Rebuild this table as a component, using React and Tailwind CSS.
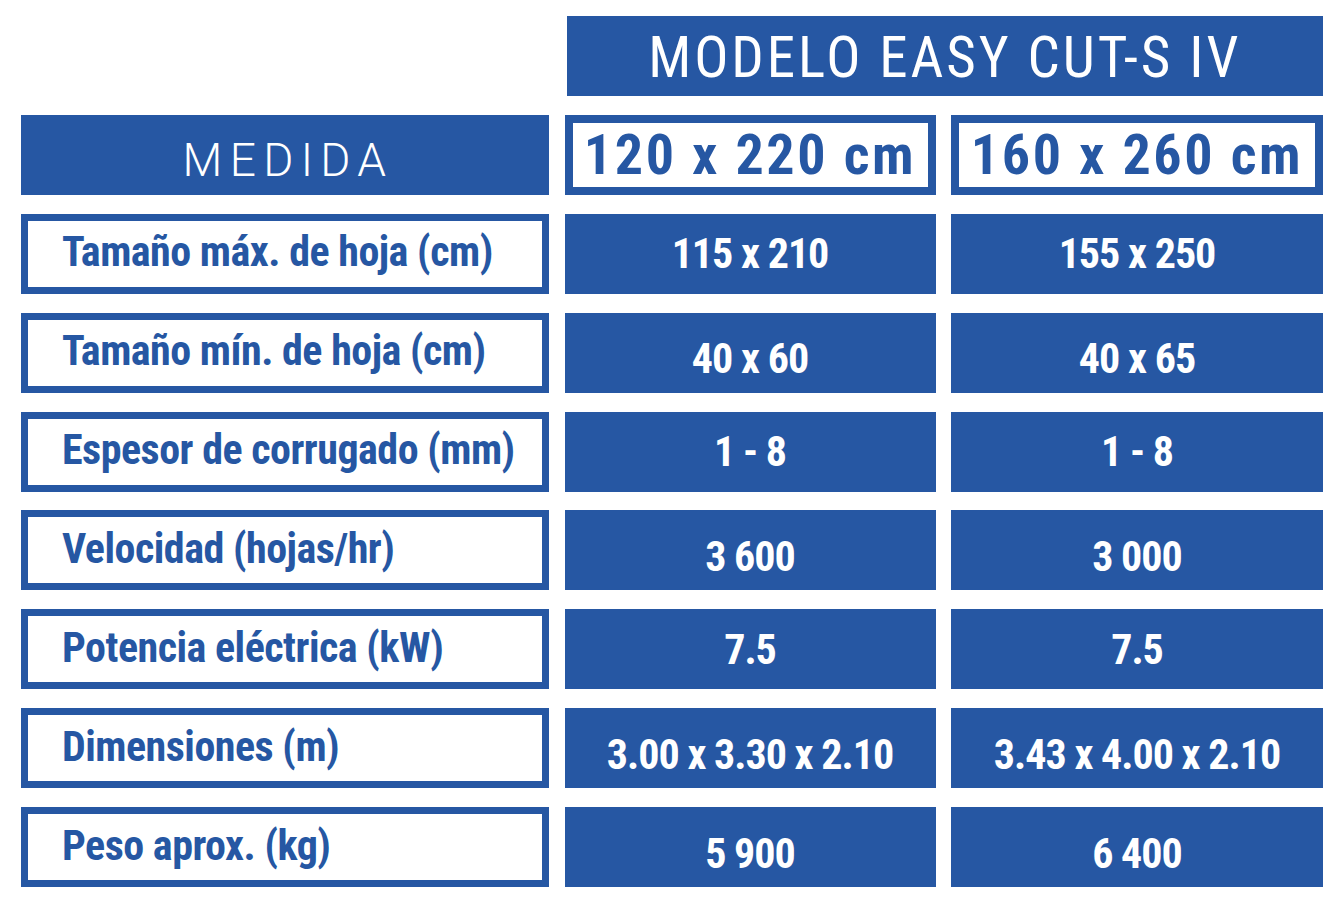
import React from 'react';

const rows = [
    { label: 'Tamaño máx. de hoja (cm)', a: '115 x 210', b: '155 x 250', low: false },
    { label: 'Tamaño mín. de hoja (cm)', a: '40 x 60', b: '40 x 65', low: true },
    { label: 'Espesor de corrugado (mm)', a: '1 - 8', b: '1 - 8', low: false },
    { label: 'Velocidad (hojas/hr)', a: '3 600', b: '3 000', low: true },
    { label: 'Potencia eléctrica (kW)', a: '7.5', b: '7.5', low: false },
    { label: 'Dimensiones (m)', a: '3.00 x 3.30 x 2.10', b: '3.43 x 4.00 x 2.10', low: true },
    { label: 'Peso aprox. (kg)', a: '5 900', b: '6 400', low: true },
];

function ValueCell({ text, low }) {
    return (
        <div className={`h-[80px] bg-[#2657a3] flex items-center justify-center text-white font-bold text-[42px] tracking-[-1px] font-['Liberation_Sans_Narrow','Roboto_Condensed',sans-serif] ${low ? 'pt-[12px]' : 'pt-0'}`}>
            {text}
        </div>
    );
}

function SizeCell({ text }) {
    return (
        <div className="h-[80px] border-[8px] border-[#2657a3] bg-white flex items-center justify-center text-[#2657a3] font-bold text-[56px] tracking-[2.6px] font-['Liberation_Sans_Narrow','Roboto_Condensed',sans-serif]">
            {text}
        </div>
    );
}

export default function App() {
    return (
        <div className="w-full h-[903px] bg-white pt-[16px] pl-[21px]">
            <div className="grid grid-cols-[528px_371px_372px] gap-x-[15.5px] gap-y-[18.9px]">
                {/* model header */}
                <div className="col-start-2 col-span-2 ml-[2px] h-[80px] bg-[#2657a3] flex items-center justify-center text-white text-[57px] tracking-[2.9px] pt-[4px] font-['Liberation_Sans_Narrow','Roboto_Condensed',sans-serif]">
                    MODELO EASY CUT-S IV
                </div>

                <div className="h-[80px] bg-[#2657a3] flex items-center justify-center text-white text-[46px] font-light tracking-[0.16em] pl-[6px] pt-[12px] font-['Roboto',sans-serif]">
                    MEDIDA
                </div>
                <SizeCell text="120 x 220 cm" />
                <SizeCell text="160 x 260 cm" />

                {rows.map((r) => (
                    <React.Fragment key={r.label}>
                        <div className="h-[80px] border-[7px] border-[#2657a3] bg-white flex items-center pl-[34px] pb-[4px] text-[#2657a3] font-bold text-[42px] tracking-[-0.5px] font-['Liberation_Sans_Narrow','Roboto_Condensed',sans-serif]">
                            {r.label}
                        </div>
                        <ValueCell text={r.a} low={r.low} />
                        <ValueCell text={r.b} low={r.low} />
                    </React.Fragment>
                ))}
            </div>
        </div>
    );
}
